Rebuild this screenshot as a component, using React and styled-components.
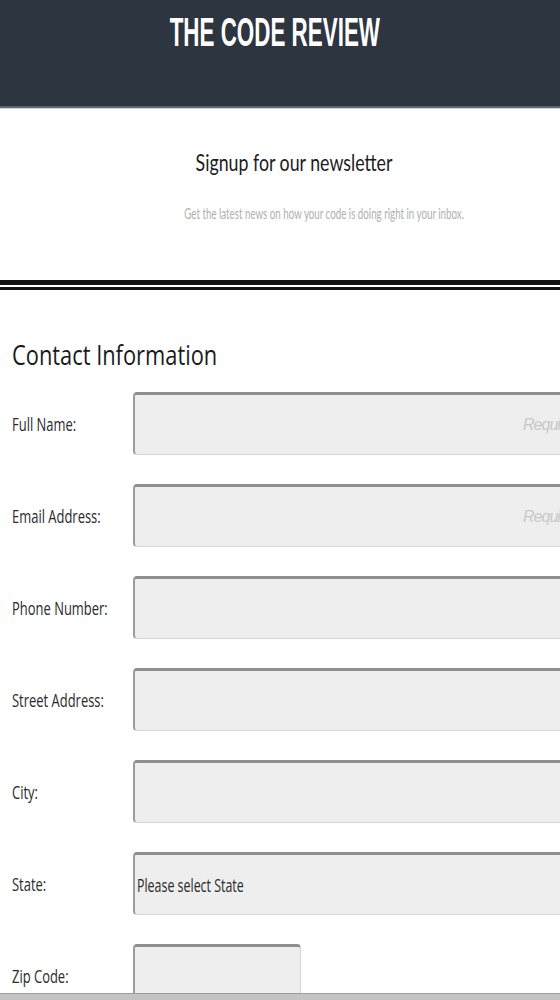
import React from "react";
import styled, { createGlobalStyle } from "styled-components";

const fields = [
  { id: "fullName", label: "Full Name:", placeholder: "Required" },
  { id: "email", label: "Email Address:", placeholder: "Required" },
  { id: "phone", label: "Phone Number:" },
  { id: "street", label: "Street Address:" },
  { id: "city", label: "City:" },
];

function App() {
  return (
    <>
      <GlobalStyle />
      <Masthead>
        <SiteTitle $shift={-5} $squeeze={0.56}>THE CODE REVIEW</SiteTitle>
      </Masthead>
      <Newsletter>
        <SignupTitle $shift={14} $squeeze={0.74}>Signup for our newsletter</SignupTitle>
        <SignupText $shift={44} $squeeze={0.65}>
          Get the latest news on how your code is doing right in your inbox.
        </SignupText>
      </Newsletter>
      <DoubleRule />
      <ContactForm>
        <SectionTitle>Contact Information</SectionTitle>
        <FieldGrid>
          {fields.map((f) => (
            <React.Fragment key={f.id}>
              <FieldLabel htmlFor={f.id}>
                <LabelText>{f.label}</LabelText>
              </FieldLabel>
              <TextField id={f.id} type="text" placeholder={f.placeholder} />
            </React.Fragment>
          ))}
          <FieldLabel htmlFor="state">
            <LabelText>State:</LabelText>
          </FieldLabel>
          <SelectBox id="state" role="combobox" tabIndex={0}>
            <LabelText $squeeze={0.69}>Please select State</LabelText>
          </SelectBox>
          <FieldLabel htmlFor="zip">
            <LabelText>Zip Code:</LabelText>
          </FieldLabel>
          <TextField id="zip" type="text" $short />
        </FieldGrid>
      </ContactForm>
      <ScrollTrack />
    </>
  );
}

const GlobalStyle = createGlobalStyle`
  html, body {
    margin: 0;
    padding: 0;
    background: #fff;
    overflow: hidden;
  }
  body {
    font-family: "Open Sans", "Noto Sans", sans-serif;
    color: #222;
  }
  * {
    box-sizing: border-box;
  }
`;

const Masthead = styled.header`
  height: 108px;
  padding-top: 10px;
  background-color: #2d3540;
  border-bottom: 2px solid #5f666e;
  box-shadow: 0 1px 0 #d4d4d4;
  text-align: center;
`;

const squeezed = (p) => `translateX(${p.$shift || 0}px) scaleX(${p.$squeeze})`;

const SiteTitle = styled.h1`
  display: inline-block;
  margin: 0;
  font-family: "Liberation Sans", Arial, sans-serif;
  font-weight: 700;
  font-size: 40px;
  color: #fff;
  white-space: nowrap;
  transform: ${squeezed};
`;

const Newsletter = styled.section`
  height: 172px;
  padding-top: 40px;
  display: flex;
  flex-direction: column;
  align-items: center;
  gap: 27px;
`;

const SignupTitle = styled.h2`
  margin: 0;
  font-family: Lato, "Open Sans", sans-serif;
  font-weight: 400;
  font-size: 24px;
  line-height: 1.2;
  color: #1c1c1c;
  white-space: nowrap;
  transform: ${squeezed};
`;

const SignupText = styled.p`
  margin: 0;
  font-family: Lato, "Open Sans", sans-serif;
  font-size: 15px;
  line-height: 1.2;
  color: #b0b0b0;
  white-space: nowrap;
  transform: ${squeezed};
`;

const DoubleRule = styled.hr`
  margin: 0;
  height: 10px;
  border: 0;
  border-top: 5px solid #111;
  border-bottom: 3px solid #111;
  background: #fff;
`;

const ContactForm = styled.form`
  padding: 45px 0 40px 12px;
`;

const SectionTitle = styled.h3`
  margin: 0 0 19px;
  font-family: "Open Sans", "Noto Sans", sans-serif;
  font-weight: 400;
  font-size: 28px;
  line-height: normal;
  color: #1a1a1a;
  white-space: nowrap;
  transform: scaleX(0.78);
  transform-origin: left center;
`;

const FieldGrid = styled.div`
  display: grid;
  grid-template-columns: 121px 452px;
  row-gap: 29px;
  align-items: center;
`;

const FieldLabel = styled.label`
  display: block;
`;

const LabelText = styled.span`
  display: inline-block;
  font-size: 18px;
  color: #2a2a2a;
  white-space: nowrap;
  transform: scaleX(${(p) => p.$squeeze || 0.72});
  transform-origin: left center;
`;

const boxLook = `
  height: 63px;
  background-color: #eeeeee;
  border: 1px solid #d6d6d6;
  border-top: 3px solid #8f8f8f;
  border-left: 2px solid #9c9c9c;
  border-radius: 4px;
`;

const TextField = styled.input`
  ${boxLook}
  width: ${(p) => (p.$short ? "168px" : "452px")};
  padding: 0 4px 0 10px;
  font-family: "Liberation Sans", sans-serif;
  font-size: 16px;
  text-align: right;
  outline: none;

  &::placeholder {
    color: #c8c8c8;
    font-style: italic;
    letter-spacing: -1px;
  }
`;

const SelectBox = styled.div`
  ${boxLook}
  width: 452px;
  display: flex;
  align-items: center;
  padding-left: 2px;
  cursor: pointer;
`;

const ScrollTrack = styled.div`
  position: fixed;
  left: 0;
  right: 0;
  bottom: 0;
  height: 7px;
  background-color: #c3c3c3;
  border-top: 1px solid #9d9d9d;
`;

export default App;
